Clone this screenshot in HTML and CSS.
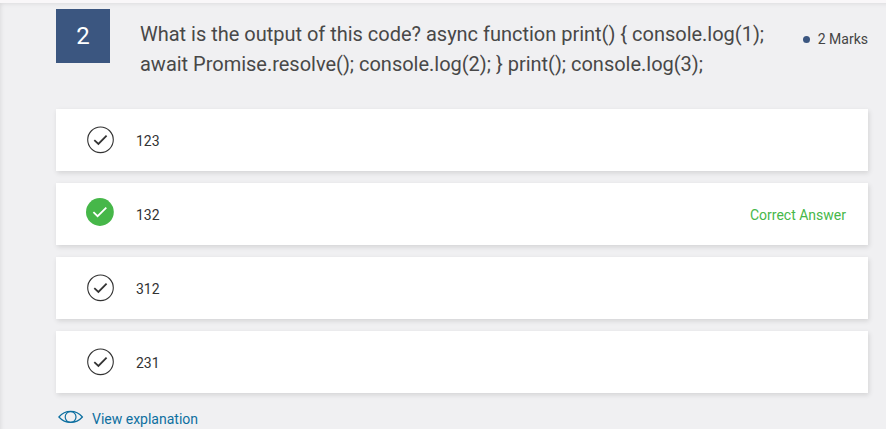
FILE: index.html
```html
<!DOCTYPE html>
<html lang="en">
<head>
<meta charset="utf-8">
<title>Question 2</title>
<link rel="stylesheet" href="styles.css">
</head>
<body>
<main class="quiz">
  <header class="question">
    <div class="number">2</div>
    <h1 class="title">What is the output of this code? async function print() { console.log(1);<br>await Promise.resolve(); console.log(2); } print(); console.log(3);</h1>
    <div class="marks"><span class="dot"></span>2 Marks</div>
  </header>
  <ul class="options">
    <li class="option">
      <svg class="check" viewBox="0 0 28 28"><circle cx="14.5" cy="13.8" r="12.8"/><path d="M8.3 14.2l4.100 3.700 8.200-8.200"/></svg>
      <span>123</span>
    </li>
    <li class="option">
      <svg class="check correct" viewBox="0 0 28 28"><circle cx="13.900" cy="14" r="13.900"/><path d="M7.400 14.200l4.200 4 8.700-8.500"/></svg>
      <span>132</span>
      <span class="verdict">Correct Answer</span>
    </li>
    <li class="option">
      <svg class="check" viewBox="0 0 28 28"><circle cx="14.5" cy="13.8" r="12.8"/><path d="M8.3 14.2l4.100 3.700 8.200-8.200"/></svg>
      <span>312</span>
    </li>
    <li class="option">
      <svg class="check" viewBox="0 0 28 28"><circle cx="14.5" cy="13.8" r="12.8"/><path d="M8.3 14.2l4.100 3.700 8.200-8.200"/></svg>
      <span>231</span>
    </li>
  </ul>
  <a class="explain">
    <svg class="eye" viewBox="0 0 26 14"><path d="M.9 7C7.300-.6 18-.6 24.400 7 18 14.200 7.300 14.200 .9 7z"/><circle cx="12.600" cy="7" r="5.400"/></svg>
    <span>View explanation</span>
  </a>
</main>
</body>
</html>
```
FILE: styles.css
```css
* { box-sizing: border-box; }
body {
  margin: 0;
  height: 429px;
  overflow: hidden;
  background: #f9f7f9;
  font-family: Roboto, "Liberation Sans", sans-serif;
  font-size: 14px;
  color: #333;
}
.quiz {
  width: 896px;
  height: 440px;
  margin-top: 3px;
  padding: 6px 28px 0 56px;
  background: #f0f0f2;
  box-shadow: inset 0 0 5px rgba(0, 0, 0, .12);
}
.question {
  display: flex;
  height: 100px;
}
.number {
  width: 54px;
  height: 54px;
  background: #3b5680;
  color: #fff;
  font-size: 24px;
  line-height: 55px;
  text-align: center;
}
.title {
  margin: 10px 0 0 30px;
  font-size: 20px;
  font-weight: 400;
  line-height: 30px;
  letter-spacing: -.012px;
  white-space: nowrap;
  color: #484848;
}
.marks {
  display: flex;
  align-items: center;
  height: 20px;
  margin: 20px 0 0 auto;
  color: #444;
}
.dot {
  width: 7px;
  height: 7px;
  margin-right: 8px;
  border-radius: 50%;
  background: #3b5680;
}
.options {
  display: grid;
  gap: 12px;
  margin: 0;
  padding: 0;
  list-style: none;
}
.option {
  display: flex;
  align-items: center;
  height: 62px;
  padding: 1px 22px 0 30px;
  background: #fff;
  box-shadow: 1px 2px 5px rgba(0, 0, 0, .12);
}
.check {
  width: 28px;
  height: 28px;
  margin: 0 22px 2px 0;
  fill: none;
  stroke: #333;
  stroke-width: 1.1;
}
.check path { stroke-width: 1.8; }
.correct { margin-bottom: 6px; }
.correct circle { fill: #46b749; stroke: none; }
.correct path { stroke: #fff; }
.verdict {
  margin-left: auto;
  color: #46b749;
}
.explain {
  display: flex;
  align-items: center;
  gap: 8px;
  margin: 16px 0 0 2px;
  height: 20px;
  color: #0d6fa0;
}
.eye {
  width: 26px;
  height: 14px;
  margin-bottom: 4px;
  fill: none;
  stroke: currentColor;
  stroke-width: 1.2;
}
```
